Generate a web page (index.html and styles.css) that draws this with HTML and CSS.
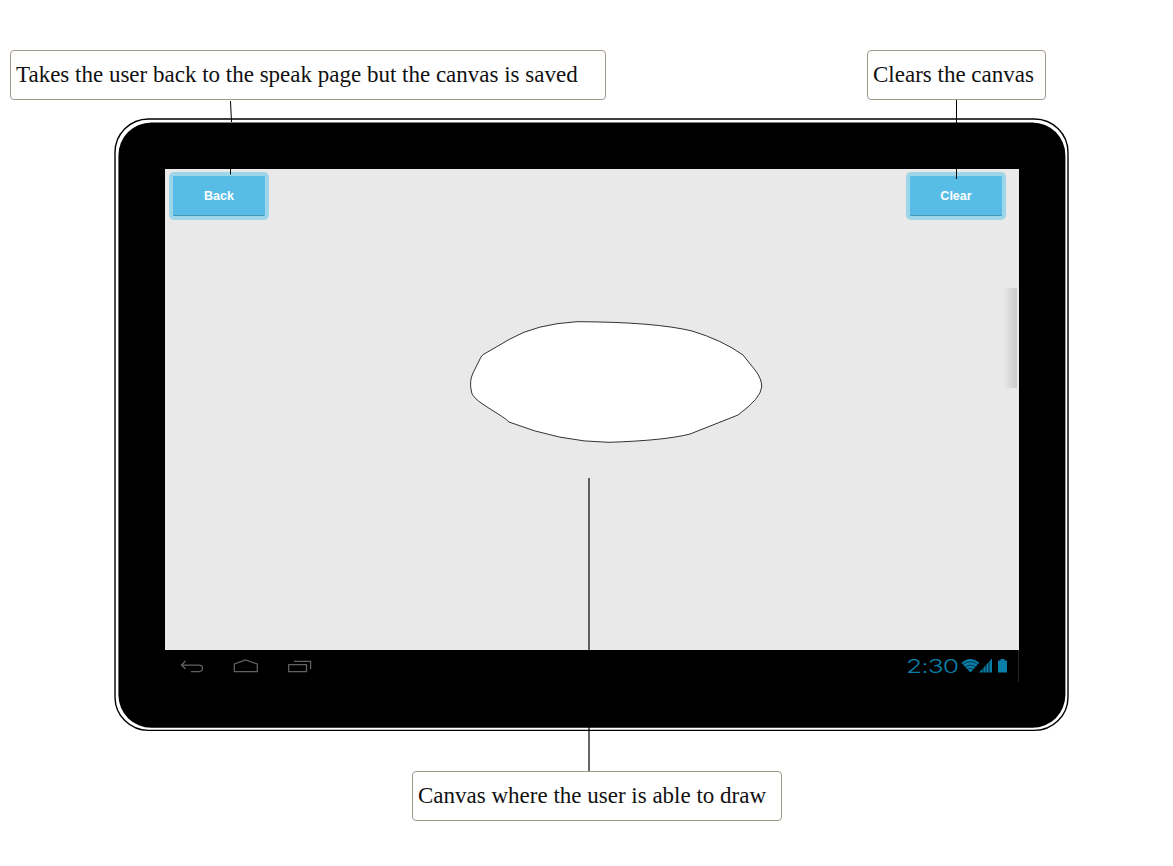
FILE: index.html
```html
<!DOCTYPE html>
<html lang="en">
<head>
<meta charset="utf-8">
<title>Canvas page</title>
<link rel="stylesheet" href="styles.css">
</head>
<body>
<main class="board">
  <section class="tablet">
    <svg class="frame" width="960" height="618" viewBox="112 116 960 618" aria-hidden="true">
      <rect x="115" y="119" width="953" height="611.4" rx="33.5" fill="#fff" stroke="#000" stroke-width="1.4"/>
      <rect x="118.4" y="122.4" width="947" height="605.4" rx="33"/>
    </svg>
    <div class="screen">
      <header class="toolbar">
        <button class="btn">Back</button>
        <button class="btn">Clear</button>
      </header>
      <div class="canvas">
        <svg class="drawing" width="300" height="130" viewBox="466 316 300 130">
          <path d="M485 353.500 L510 339 Q536 324 577 321.700 Q655 322 692 331 Q722 340 743 355 L755 370 Q762 379 761.700 387 Q761 398 738 415 L690 434 Q665 440.500 609 442.300 Q560 442 509 422 Q506 419 502 416.500 L484 405 Q472 397 471.500 392 Q469 381 473 373 L481 357 Q483 354 485 353.500Z" fill="#fff" stroke="#000" stroke-width=".8"/>
        </svg>
        <div class="drawer"></div>
      </div>
      <footer class="navbar">
        <svg class="nav" width="140" height="22" viewBox="175 655 140 22" fill="none" stroke="#626262" stroke-width="1.25">
          <path d="M185.500 661 L181.500 665 L185.500 669 M182 665 H199 Q202.500 665 202.500 668.300 Q202.500 671.500 199 671.500 H191"/>
          <path d="M234.300 671.500 V664 L245.700 660 L257.300 664 V671.500Z"/>
          <path d="M288.700 664.500 H306.500 V671.500 H288.700Z M294 661.300 H310.600 V669"/>
        </svg>
        <div class="status">
          <span class="clock"><span class="digits">2:30</span></span>
          <svg width="47" height="18" viewBox="961 657 47 18">
            <path d="M961.500 663 Q970.300 655 979.300 663 L970.400 672.500Z" fill="#087ea8"/>
            <path d="M962.500 664.800 Q970.300 658.500 978.200 664.800 M964.800 667.200 Q970.300 663 976 667.200 M967 669.300 Q970.300 667 973.600 669.300" fill="none" stroke="#000" stroke-width=".6"/>
            <path d="M979 672.500 L992 658.500 V672.500Z" fill="#087ea8"/>
            <path d="M983 667 V673 M986 664 V673 M989 661 V673" stroke="#000" stroke-width=".7"/>
            <path d="M998 660.500 H1000.500 V659 H1004.500 V660.500 H1007 V672.500 H998Z" fill="#087ea8"/>
          </svg>
        </div>
      </footer>
    </div>
  </section>
  <svg class="connectors" width="1173" height="866" viewBox="0 0 1173 866" fill="none" stroke="#000" aria-hidden="true">
    <path d="M230.500 101 L231.500 122 M230.500 168 V174.500 M956.500 100 V179"/>
    <path d="M589 478 V771" stroke-width="1.2"/>
  </svg>
  <p class="note note-back"><span>Takes the user back to the speak page but the canvas is saved</span></p>
  <p class="note note-clear"><span>Clears the canvas</span></p>
  <p class="note note-canvas"><span>Canvas where the user is able to draw</span></p>
</main>
</body>
</html>
```
FILE: styles.css
```css
* { box-sizing: border-box; }
body { margin: 0; background: #fff; overflow: hidden; }

/* Free annotation board: the device and its notes are placed on it */
.board { position: relative; width: 1173px; height: 866px; }
.tablet {
  position: absolute;
  left: 112px;
  top: 116px;
  width: 960px;
  height: 618px;
  padding: 53px 53px 52px;
}
.frame { position: absolute; left: 0; top: 0; }
.screen {
  position: relative;
  display: flex;
  flex-direction: column;
  width: 854px;
  height: 513px;
  background: #e9e9e9;
}
.toolbar {
  display: flex;
  justify-content: space-between;
  padding: 3px 13px 0 4px;
}
.btn {
  width: 100px;
  height: 48px;
  padding: 0 0 1px;
  border: 4px solid #9dd5e9;
  border-radius: 5px;
  background: #57bde6;
  box-shadow: inset 0 -1px 0 #4496b8;
  color: #fff;
  font: bold 12.5px "Liberation Sans", Arial, sans-serif;
}
.canvas {
  flex: 1;
  display: flex;
  justify-content: space-between;
  align-items: flex-start;
  padding: 68px 2px 0 301px;
}
.drawing { margin-top: 28px; }
.drawer {
  width: 14px;
  height: 100px;
  background: linear-gradient(to right, #e9e9e9, #cbcbcb);
}
.navbar {
  display: flex;
  justify-content: space-between;
  height: 32px;
  padding: 5px 10px 0 10px;
  background: #000;
  border-right: 1px solid #242424;
}
.status { display: flex; padding-top: 2px; }
.clock { width: 55px; height: 18px; }
.digits {
  display: block;
  width: 36px;
  transform: scaleX(1.43);
  transform-origin: 0 0;
  color: #087ea8;
  font: 300 18.5px/18px Inter, sans-serif;
  letter-spacing: -0.7px;
  white-space: nowrap;
}
.connectors { position: absolute; left: 0; top: 0; }
.note {
  position: absolute;
  display: flex;
  align-items: center;
  height: 50px;
  margin: 0;
  padding: 0 0 0 5px;
  border: 1.4px solid #a2988d;
  border-radius: 4px;
  background: #fff;
  color: #111;
  font: 23px "Liberation Serif", "Times New Roman", serif;
  white-space: nowrap;
}
.note-back { left: 10px; top: 50px; width: 596px; }
.note-clear { left: 867px; top: 50px; width: 179px; }
.note-canvas { left: 412px; top: 771px; width: 370px; }
```
